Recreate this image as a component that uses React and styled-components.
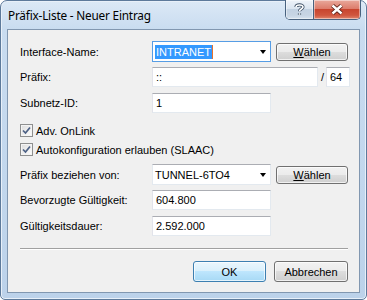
import React from "react";
import styled, { createGlobalStyle } from "styled-components";

const Global = createGlobalStyle`
  html, body {
    margin: 0;
    padding: 0;
    background: #ffffff;
  }
  body {
    font-family: "Liberation Sans", Arial, sans-serif;
    font-size: 11px;
    color: #000;
  }
`;

const Frame = styled.div`
  box-sizing: border-box;
  width: 367px;
  height: 300px;
  display: flex;
  flex-direction: column;
  padding: 0 6px 6px 6px;
  border: 1px solid #5d7a9b;
  border-radius: 7px 7px 5px 5px;
  background: linear-gradient(#dce9f6, #c9dcf0 28px, #c2d7ed 60%, #bcd2ea);
  box-shadow: inset 0 0 0 1px #e8f0f9;
`;

const TitleBar = styled.div`
  height: 28px;
  display: flex;
  justify-content: space-between;
  align-items: flex-start;
`;

const Title = styled.div`
  font-family: "Noto Sans", "Open Sans", sans-serif;
  font-size: 11.8px;
  color: #000;
  margin: 6px 0 0 1px;
  letter-spacing: -0.2px;
`;

const Captions = styled.div`
  display: flex;
  margin-top: -1px;
  margin-right: -1px;
  border: 1px solid #48627f;
  border-top: none;
  border-radius: 0 0 5px 5px;
  overflow: hidden;
  height: 19px;
`;

const CaptionButton = styled.div`
  width: ${(p) => p.$w}px;
  height: 19px;
  display: flex;
  align-items: center;
  justify-content: center;
  background: ${(p) =>
    p.$close
      ? "linear-gradient(#e9a99c, #dd7d6c 45%, #c8452f 50%, #d0563e 80%, #e0866e)"
      : "linear-gradient(#eef3f9, #dbe5f0 45%, #c3d2e2 50%, #c7d5e4 80%, #d6e2ee)"};
  box-shadow: inset 0 0 0 1px rgba(255, 255, 255, 0.45);
  & + & {
    border-left: 1px solid #48627f;
  }
`;

const Client = styled.div`
  flex: 1;
  display: flex;
  flex-direction: column;
  border: 1px solid #8197b0;
  background: #f0f0f0;
  padding: 0 11px 0 12px;
`;

const Row = styled.div`
  display: grid;
  grid-template-columns: 132px auto;
  align-items: center;
  height: ${(p) => p.$h || 20}px;
  margin-top: ${(p) => p.$mt}px;
`;

const Label = styled.span`
  white-space: nowrap;
`;

const Fields = styled.div`
  display: flex;
  align-items: center;
`;

const TextBox = styled.div`
  box-sizing: border-box;
  width: ${(p) => p.$w}px;
  height: 20px;
  background: #fff;
  border: 1px solid #e3e9ef;
  border-top-color: #abadb3;
  border-left-color: #e2e3ea;
  display: flex;
  align-items: center;
  padding-left: 3px;
  white-space: nowrap;
`;

const Combo = styled.div`
  box-sizing: border-box;
  width: 119px;
  height: 21px;
  background: #fff;
  border: 1px solid ${(p) => (p.$focus ? "#569de5" : "#e3e9ef")};
  ${(p) => (p.$focus ? "" : "border-top-color: #abadb3;")}
  display: flex;
  align-items: center;
  justify-content: space-between;
  padding: 0 3px 0 2px;
  white-space: nowrap;
`;

const Selected = styled.span`
  background: #3399ff;
  color: #fff;
  padding: 1px 1px;
  border-right: 1px solid #e8722c;
`;

const Arrow = styled.span`
  width: 0;
  height: 0;
  border-left: 3.5px solid transparent;
  border-right: 3.5px solid transparent;
  border-top: 4px solid #000;
  margin-right: 1px;
`;

const Button = styled.button`
  box-sizing: border-box;
  width: ${(p) => p.$w}px;
  height: ${(p) => p.$h || 21}px;
  margin-left: ${(p) => p.$ml || 0}px;
  padding: 0;
  font-family: "Liberation Sans", Arial, sans-serif;
  font-size: 11px;
  color: #000;
  border: 1px solid ${(p) => (p.$default ? "#3c7fb1" : "#707070")};
  border-radius: 3px;
  background: ${(p) =>
    p.$default
      ? "linear-gradient(#eaf6fd, #d9f0fc 48%, #bee6fd 50%, #a7d9f5)"
      : "linear-gradient(#f2f2f2, #ebebeb 48%, #dddddd 50%, #cfcfcf)"};
  box-shadow: inset 0 0 0 1px rgba(255, 255, 255, 0.7);
  u {
    text-decoration: underline;
  }
`;

const Slash = styled.span`
  margin: 0 3px 0 3px;
  width: 2px;
`;

const CheckRow = styled.label`
  display: flex;
  align-items: center;
  height: 19px;
  margin-top: ${(p) => p.$mt}px;
`;

const Box = styled.span`
  box-sizing: border-box;
  width: 13px;
  height: 13px;
  border: 1px solid #8e8f8f;
  background: linear-gradient(135deg, #dcdcdc, #fefefe);
  box-shadow: inset 0 0 0 1px #f4f4f4;
  display: flex;
  align-items: center;
  justify-content: center;
  margin-right: 3px;
`;

const Separator = styled.div`
  height: 0;
  border-top: 1px solid #a0a0a0;
  border-bottom: 1px solid #fff;
  margin-top: ${(p) => p.$mt}px;
`;

const Footer = styled.div`
  display: flex;
  justify-content: flex-end;
  margin-top: 11px;
`;

function Check({ children, mt }) {
  return (
    <CheckRow $mt={mt}>
      <Box>
        <svg width="9" height="9" viewBox="0 0 9 9">
          <path
            d="M1 4.5 L3.5 7 L8 1.5"
            fill="none"
            stroke="#4d6185"
            strokeWidth="1.7"
          />
        </svg>
      </Box>
      {children}
    </CheckRow>
  );
}

export default function App() {
  return (
    <>
      <Global />
      <Frame>
        <TitleBar>
          <Title>Präfix-Liste - Neuer Eintrag</Title>
          <Captions>
            <CaptionButton $w={27}>
              <svg width="11" height="13" viewBox="0 0 11 13">
                <path
                  d="M2 4 C2 1.5 9 1 9 4 C9 6 5.5 6 5.5 8.3 M5.5 10.2 V11.8"
                  fill="none"
                  stroke="#3f5166"
                  strokeWidth="3.2"
                />
                <path
                  d="M2 4 C2 1.5 9 1 9 4 C9 6 5.5 6 5.5 8.3 M5.5 10.2 V11.8"
                  fill="none"
                  stroke="#fff"
                  strokeWidth="1.6"
                />
              </svg>
            </CaptionButton>
            <CaptionButton $w={46} $close>
              <svg width="14" height="11" viewBox="0 0 14 11">
                <path
                  d="M2.5 1.5 L11.5 9.5 M11.5 1.5 L2.5 9.5"
                  stroke="#5a1f16"
                  strokeWidth="4.2"
                />
                <path
                  d="M2.5 1.5 L11.5 9.5 M11.5 1.5 L2.5 9.5"
                  stroke="#fff"
                  strokeWidth="2.4"
                />
              </svg>
            </CaptionButton>
          </Captions>
        </TitleBar>
        <Client>
          <Row $h={21} $mt={11}>
            <Label>Interface-Name:</Label>
            <Fields>
              <Combo $focus>
                <Selected>INTRANET</Selected>
                <Arrow />
              </Combo>
              <Button $w={72} $h={18} $ml={5}>
                <u>W</u>ählen
              </Button>
            </Fields>
          </Row>
          <Row $mt={5}>
            <Label>Präfix:</Label>
            <Fields>
              <TextBox $w={166}>::</TextBox>
              <Slash>/</Slash>
              <TextBox $w={24}>64</TextBox>
            </Fields>
          </Row>
          <Row $mt={6}>
            <Label>Subnetz-ID:</Label>
            <Fields>
              <TextBox $w={119}>1</TextBox>
            </Fields>
          </Row>
          <Check mt={8}>Adv. OnLink</Check>
          <Check mt={0}>Autokonfiguration erlauben (SLAAC)</Check>
          <Row $h={21} $mt={5}>
            <Label>Präfix beziehen von:</Label>
            <Fields>
              <Combo>
                <span>TUNNEL-6TO4</span>
                <Arrow />
              </Combo>
              <Button $w={72} $h={18} $ml={5}>
                <u>W</u>ählen
              </Button>
            </Fields>
          </Row>
          <Row $mt={5}>
            <Label>Bevorzugte Gültigkeit:</Label>
            <Fields>
              <TextBox $w={119}>604.800</TextBox>
            </Fields>
          </Row>
          <Row $mt={6}>
            <Label>Gültigkeitsdauer:</Label>
            <Fields>
              <TextBox $w={119}>2.592.000</TextBox>
            </Fields>
          </Row>
          <Separator $mt={12} />
          <Footer>
            <Button $w={73} $default>
              OK
            </Button>
            <Button $w={74} $ml={8}>
              Abbrechen
            </Button>
          </Footer>
        </Client>
      </Frame>
    </>
  );
}
